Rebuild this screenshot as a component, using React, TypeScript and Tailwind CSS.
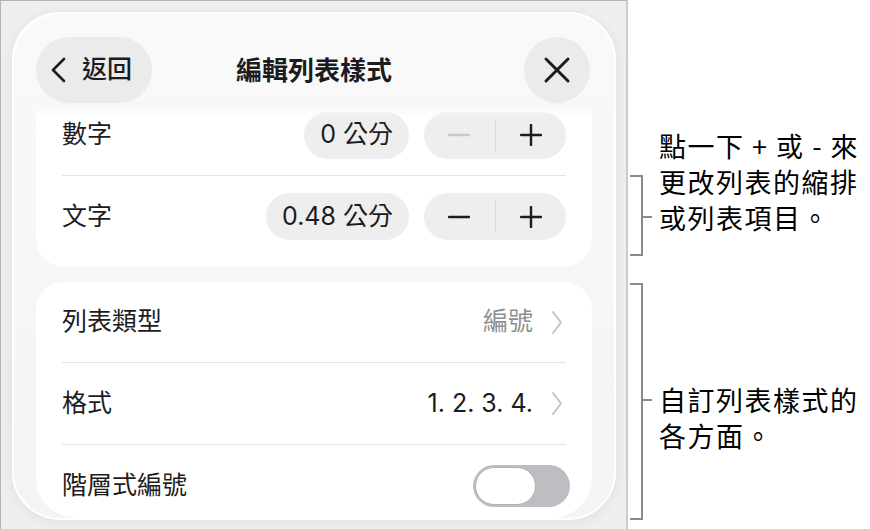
import React from 'react';

const FONT = '"Inter", "Noto Sans CJK TC", "Noto Sans", sans-serif';

function ChevronLeft() {
  return (
    <svg width="17" height="26" viewBox="0 0 17 26" fill="none">
      <path d="M14 2 L3 13 L14 24" stroke="#1c1c1e" strokeWidth="2.6" strokeLinecap="round" strokeLinejoin="round" />
    </svg>
  );
}

function ChevronRight() {
  return (
    <svg width="12" height="25" viewBox="0 0 12 25" fill="none">
      <path d="M2 2 L10 12.5 L2 23" stroke="#c4c4c7" strokeWidth="2" strokeLinecap="round" strokeLinejoin="round" />
    </svg>
  );
}

function CloseIcon() {
  return (
    <svg width="28" height="28" viewBox="0 0 28 28" fill="none">
      <path d="M3 3 L25 25 M25 3 L3 25" stroke="#1c1c1e" strokeWidth="3" strokeLinecap="round" />
    </svg>
  );
}

function Minus({ color }: { color: string }) {
  return (
    <svg width="22" height="22" viewBox="0 0 22 22" fill="none">
      <path d="M1 11 H21" stroke={color} strokeWidth="2.4" strokeLinecap="round" />
    </svg>
  );
}

function Plus() {
  return (
    <svg width="22" height="22" viewBox="0 0 22 22" fill="none">
      <path d="M1 11 H21 M11 1 V21" stroke="#1c1c1e" strokeWidth="2.4" strokeLinecap="round" />
    </svg>
  );
}

function Stepper({ value, minusDisabled }: { value: string; minusDisabled?: boolean }) {
  return (
    <div className="flex items-center gap-[15px]">
      <div className="h-[47px] px-[16px] rounded-full bg-[#eeeeef] flex items-center text-[25px] text-[#1c1c1e]">
        {value}
      </div>
      <div className="w-[142px] h-[47px] rounded-full bg-[#eeeeef] flex items-center">
        <div className="flex-1 flex items-center justify-center">
          <Minus color={minusDisabled ? '#c9c9cb' : '#1c1c1e'} />
        </div>
        <div className="w-px h-[33px] bg-[#d9d9db]" />
        <div className="flex-1 flex items-center justify-center">
          <Plus />
        </div>
      </div>
    </div>
  );
}

function Divider() {
  return <div className="h-px bg-[#e4e4e6]" />;
}

export default function App() {
  return (
    <div className="w-[870px] h-[529px] flex bg-white overflow-hidden" style={{ fontFamily: FONT }}>
      {/* screenshot frame */}
      <div className="w-[628px] h-full shrink-0 border-l border-t border-r-2 border-l-[#b4b4b4] border-t-[#b4b4b4] border-r-[#cbcbcb] bg-[#efefef] pl-[11px] pt-[11px]">
        <div className="relative w-[604px] h-[508px] rounded-[48px] bg-gradient-to-b from-[#f9f9f9] to-[#f4f4f4] border-2 border-white shadow-[0_2px_14px_rgba(0,0,0,0.07)] overflow-hidden pl-[22px] pr-[22px] pt-[23px]">
          {/* header */}
          <div className="h-[66px] grid grid-cols-[1fr_auto_1fr] items-center relative z-10">
            <div className="w-[116px] h-[66px] rounded-full bg-[#ebebeb] flex items-center pl-[14px] gap-[15px]">
              <ChevronLeft />
              <span className="text-[25px] font-medium text-[#1c1c1e]">返回</span>
            </div>
            <div className="text-[26px] font-semibold text-[#1c1c1e]">編輯列表樣式</div>
            <div className="justify-self-end mr-[2px] w-[66px] h-[66px] rounded-full bg-[#ebebeb] flex items-center justify-center">
              <CloseIcon />
            </div>
          </div>

          {/* indent card */}
          <div className="relative bg-white rounded-b-[28px] px-[26px] pb-[10px]">
            <div className="absolute left-0 right-0 top-0 h-[16px] bg-gradient-to-b from-[#f6f6f6] to-transparent" />
            <div className="h-[72px] pb-[8px] flex items-center justify-between">
              <span className="text-[25px] text-[#1c1c1e]">數字</span>
              <Stepper value="0 公分" minusDisabled />
            </div>
            <Divider />
            <div className="h-[81px] flex items-center justify-between">
              <span className="text-[25px] text-[#1c1c1e]">文字</span>
              <Stepper value="0.48 公分" />
            </div>
          </div>

          {/* list options card */}
          <div className="mt-[15px] bg-white rounded-t-[28px] rounded-b-[40px] h-[236px] overflow-hidden px-[26px]">
            <div className="h-[80px] flex items-center justify-between">
              <span className="text-[25px] text-[#1c1c1e]">列表類型</span>
              <div className="flex items-center gap-[18px] mr-[3px]">
                <span className="text-[25px] text-[#8e8e93]">編號</span>
                <ChevronRight />
              </div>
            </div>
            <Divider />
            <div className="h-[81px] flex items-center justify-between">
              <span className="text-[25px] text-[#1c1c1e]">格式</span>
              <div className="flex items-center gap-[18px] mr-[3px]">
                <span className="text-[25px] text-[#1c1c1e]">1. 2. 3. 4.</span>
                <ChevronRight />
              </div>
            </div>
            <Divider />
            <div className="h-[82px] flex items-center justify-between">
              <span className="text-[25px] text-[#1c1c1e]">階層式編號</span>
              <div className="-mr-[4px] w-[97px] h-[42px] rounded-full bg-[#bebec2] p-[2px] flex items-center">
                <div className="w-[61px] h-[38px] rounded-full bg-white border border-[#b0b0b4]" />
              </div>
            </div>
          </div>
        </div>
      </div>

      {/* callouts */}
      <div className="flex-1 flex flex-col text-[27px] leading-[36px] tracking-[1.5px] text-black" style={{ fontFamily: '"Noto Sans CJK TC", sans-serif' }}>
        <div className="mt-[128px] flex items-start">
          <div className="ml-[2px] mt-[47px] w-[13px] h-[81px] border-y-2 border-r-2 border-[#8a8a8a]" />
          <div className="mt-[88px] w-[9px] h-[2px] bg-[#8a8a8a]" />
          <div className="ml-[7px] whitespace-nowrap">
            <div>點一下 + 或 - 來</div>
            <div>更改列表的縮排</div>
            <div>或列表項目。</div>
          </div>
        </div>
        <div className="mt-[27px] flex items-start">
          <div className="ml-[2px] w-[13px] h-[237px] border-y-2 border-r-2 border-[#8a8a8a]" />
          <div className="mt-[116px] w-[9px] h-[2px] bg-[#8a8a8a]" />
          <div className="ml-[7px] mt-[99px] whitespace-nowrap">
            <div>自訂列表樣式的</div>
            <div>各方面。</div>
          </div>
        </div>
      </div>
    </div>
  );
}
